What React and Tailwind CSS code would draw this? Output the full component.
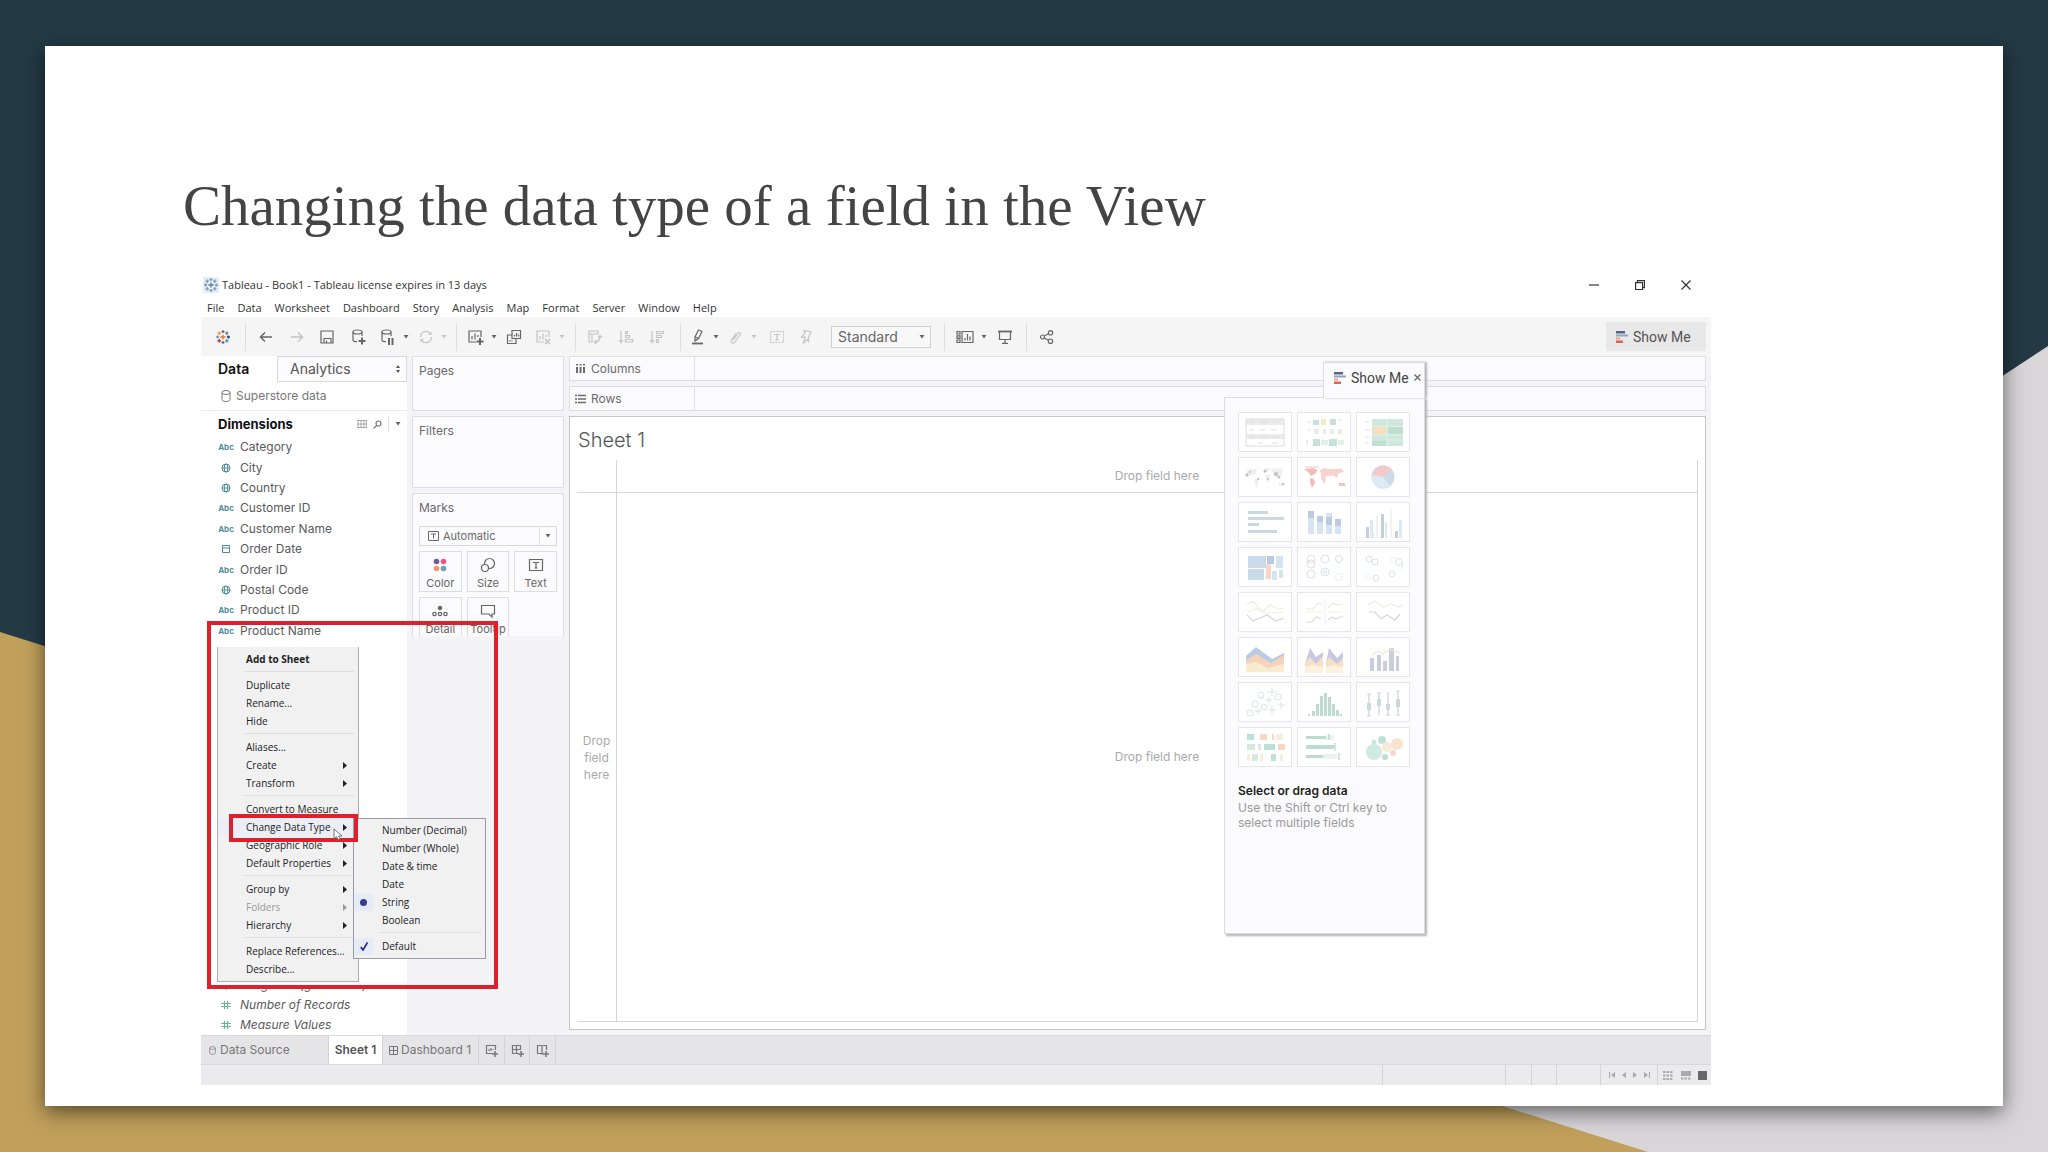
const MENUS = ['File', 'Data', 'Worksheet', 'Dashboard', 'Story', 'Analysis', 'Map', 'Format', 'Server', 'Window', 'Help'];

const FIELDS = [
  { type: 'abc', name: 'Category' },
  { type: 'geo', name: 'City' },
  { type: 'geo', name: 'Country' },
  { type: 'abc', name: 'Customer ID' },
  { type: 'abc', name: 'Customer Name' },
  { type: 'date', name: 'Order Date' },
  { type: 'abc', name: 'Order ID' },
  { type: 'geo', name: 'Postal Code' },
  { type: 'abc', name: 'Product ID' },
  { type: 'abc', name: 'Product Name' },
];

const CONTEXT_ITEMS = [
  { label: 'Add to Sheet', bold: true }, null,
  { label: 'Duplicate' }, { label: 'Rename...' }, { label: 'Hide' }, null,
  { label: 'Aliases...' }, { label: 'Create', sub: true }, { label: 'Transform', sub: true }, null,
  { label: 'Convert to Measure' }, { label: 'Change Data Type', sub: true, active: true },
  { label: 'Geographic Role', sub: true }, { label: 'Default Properties', sub: true }, null,
  { label: 'Group by', sub: true }, { label: 'Folders', sub: true, disabled: true }, { label: 'Hierarchy', sub: true }, null,
  { label: 'Replace References...' }, { label: 'Describe...' },
];

const TYPE_ITEMS = [
  { label: 'Number (Decimal)' }, { label: 'Number (Whole)' }, { label: 'Date & time' }, { label: 'Date' },
  { label: 'String', mark: 'dot' }, { label: 'Boolean' }, null, { label: 'Default', mark: 'check' },
];

const Icon = ({ w = 16, h = 16, className = '', sw = 1.2, children }) => (
  <svg width={w} height={h} viewBox={`0 0 ${w} ${h}`} fill="none" stroke="currentColor" strokeWidth={sw} className={`shrink-0 ${className}`}>
    {children}
  </svg>
);

const Caret = ({ className = 'text-[#666]' }) => (
  <svg width="6" height="4" viewBox="0 0 6 4" className={`shrink-0 ${className}`}><path d="M.5 0h5L3 3.500z" fill="currentColor" /></svg>
);

const plus = (x, y, r, c) => <path key={`${x}-${y}`} d={`M${x - r} ${y}h${2 * r}M${x} ${y - r}v${2 * r}`} stroke={c} />;

const Logo = ({ mono }) => (
  <Icon className={mono ? 'bg-[#e6edf5]' : ''} sw={1.3}>
    {plus(8, 8, 2.6, mono ? '#5b7ea8' : '#e8762c')}
    {plus(8, 2.6, 1.5, mono ? '#7d9cc0' : '#5b6591')}
    {plus(8, 13.4, 1.5, mono ? '#7d9cc0' : '#5b6591')}
    {plus(2.6, 8, 1.5, mono ? '#7d9cc0' : '#7199a6')}
    {plus(13.4, 8, 1.5, mono ? '#7d9cc0' : '#1f457e')}
    {plus(4.2, 4.2, 1.7, mono ? '#7d9cc0' : '#eb912c')}
    {plus(11.8, 4.2, 1.7, mono ? '#7d9cc0' : '#59879b')}
    {plus(4.2, 11.8, 1.7, mono ? '#7d9cc0' : '#c72035')}
    {plus(11.8, 11.8, 1.7, mono ? '#7d9cc0' : '#5b879b')}
  </Icon>
);

const Cyl = ({ w = 10, h = 12, className }) => (
  <svg width={w} height={h} viewBox="0 0 10 12" fill="none" stroke="currentColor" className={`shrink-0 ${className || ''}`}>
    <ellipse cx="5" cy="2.5" rx="4" ry="2" /><path d="M1 2.5v7c0 1.1 1.8 2 4 2s4-.9 4-2v-7" />
  </svg>
);

const ShowMeIcon = () => (
  <svg width="12" height="12" viewBox="0 0 12 12" className="shrink-0">
    <path d="M0 0h9v2.500H0z" fill="#5a628c" /><path d="M0 3.500h12v2H0z" fill="#8fa6c0" />
    <path d="M0 6.500h4v2H0z" fill="#f0a58a" /><path d="M0 9.500h7V12H0z" fill="#e0605c" />
  </svg>
);

/* ---------- toolbar ---------- */
const ICONS = {
  back: <Icon sw={1.5}><path d="M14 8H3M7 3.5 2.5 8 7 12.5" /></Icon>,
  forward: <Icon sw={1.5}><path d="M2 8h11M9 3.5 13.500 8 9 12.500" /></Icon>,
  save: <Icon><path d="M2 2h12v12H2zM5 14V9.500h7V14M7.500 14v-2.500" /></Icon>,
  dbAdd: <Icon w={18} h={18}><path d="M4 4v8c0 1 2 1.700 4 1.700M13 8V4" /><ellipse cx="8.500" cy="4" rx="4.500" ry="2" /><path d="M13 9.500v7M9.500 13h7" strokeWidth="2" /></Icon>,
  dbPause: <Icon w={18} h={18}><path d="M4 4v8c0 1 2 1.700 4 1.700M13 8V4" /><ellipse cx="8.500" cy="4" rx="4.500" ry="2" /><path d="M11 10v7M14.500 10v7" strokeWidth="2" /></Icon>,
  refresh: <Icon><path d="M2.500 8A5.500 5.500 0 0 1 12 4.200M13.500 8A5.500 5.500 0 0 1 4 11.800" /><path d="M13.500 2.500v3.500H10zM2.500 13.500V10H6z" fill="currentColor" stroke="none" /></Icon>,
  sheetAdd: <Icon w={18} h={18}><path d="M10 14H3V3h12v6M6 11.500V8M9 11.500v-6M12 9V7" /><path d="M14 10v7M10.500 13.500h7" strokeWidth="2" /></Icon>,
  duplicate: <Icon><path d="M6 1.500h8.500v8H6zM8.500 7.500V6M10.500 7.500V4M12.500 7.500v-2M6 6H1.500v8.500H10v-5M4 12.500V11M6 12.500v-1" /></Icon>,
  clear: <Icon w={18} h={18}><path d="M10 14H3V3h12v6M6 11.500V8M9 11.500v-6M12 9V7" /><path d="m11 11 5 5m0-5-5 5" strokeWidth="1.500" /></Icon>,
  swap: <Icon><path d="M2 2h9v3H2zM2 5v8h3V5M5 5v8M8 13c4 0 5-2 5-6M11 8.500l2-2 2 2M9.500 11 7.500 13l2 2" /></Icon>,
  asc: <Icon><path d="M3 2v11M1 11l2 2.500L5 11M7.500 2.500h2v2h-2zM7.500 6.500h4v2h-4zM7.500 10.500h7v2.500h-7z" /></Icon>,
  desc: <Icon><path d="M3 2v11M1 11l2 2.500L5 11M7.500 2.500h7v2h-7zM7.500 6.500h5v2h-5zM7.500 10.500h2v3h-2z" /></Icon>,
  highlight: <Icon><path d="M2 14.500h11" strokeWidth="1.800" /><path d="M8.500 1 12 2.500 8.500 9.500 5 12V8zM5.500 8l3 1.500" /></Icon>,
  clip: <Icon><path d="m5 11 5-7c1-1.300 3.200 0 2.300 1.500L7 13c-1.800 2.400-5 .3-3.500-2L8 4.500M6.500 9.500 9 6" /></Icon>,
  label: <Icon><path d="M1.500 2.500h13v11h-13z" strokeDasharray="2 1" /><path d="M5 5.500h6M8 5.500V11M6.500 11h3" /></Icon>,
  pin: <Icon><path d="M6 1.500 7 4 3.500 8.500 7 8l-1.500 6L9 10.500l1.500 2V8.500L13 3z" /></Icon>,
  cards: <Icon w={18}><path d="M1 2.500h3v2.500H1zM1 6.800h3v2.500H1zM1 11h3v2.500H1zM6 2.500h11v11H6zM9 11.500V9M11.500 11.500V5M14 11.500V7.500" /></Icon>,
  present: <Icon><path d="M1 2.500h14" strokeWidth="1.800" /><path d="M2.500 3v7.500h11V3M8 10.500V14M5 14.300h6" /></Icon>,
  share: <Icon><circle cx="3.500" cy="8" r="2" /><circle cx="11.500" cy="3.800" r="2.200" /><circle cx="11.500" cy="12.200" r="2.200" /><path d="m5.300 7 4.200-2.200M5.300 9l4.200 2.200" /></Icon>,
};

// slot widths keep the uneven rhythm of the tool bar
const TOOLS_LEFT = [
  ['logo', 'w-11'], ['|'],
  ['back', 'w-10'], ['forward', 'w-[22px]', '', 'off'], ['save', 'w-[38px]'], ['dbAdd', 'w-6'], ['dbPause', 'w-[46px]', 'caret'], ['refresh', 'w-8 mr-2', 'caret', 'off'], ['|'],
  ['sheetAdd', 'w-12', 'caret'], ['duplicate', 'w-[18px]'], ['clear', 'w-[52px]', 'caret', 'off'], ['|'],
  ['swap', 'w-[38px]', '', 'off'], ['asc', 'w-6', '', 'off'], ['desc', 'w-[38px] mr-1', '', 'off'], ['|'],
  ['highlight', 'w-[46px]', 'caret'], ['clip', 'w-[31px]', 'caret', 'off'], ['label', 'w-[38px]', '', 'off'], ['pin', 'w-5 mr-[15px]', '', 'off'],
];
const TOOLS_RIGHT = [['|'], ['cards', 'w-[52px]', 'caret'], ['present', 'w-4 mr-[13px]'], ['|'], ['share', 'w-10']];

function Tools({ items }) {
  return items.map(([name, width, caret, off], i) => name === '|'
    ? <span key={i} className="w-px h-7 bg-[#dedee0] shrink-0" />
    : (
      <button key={i} aria-label={name} className={`flex items-center justify-center gap-[7px] shrink-0 ${width} ${off ? 'text-[#c4c4c6]' : 'text-[#666]'}`}>
        {name === 'logo' ? <Logo /> : ICONS[name]}
        {caret && <Caret className="text-current" />}
      </button>
    ));
}

function Toolbar() {
  return (
    <div className="flex items-center h-[39px] bg-[#f5f5f6] pr-[5px]">
      <Tools items={TOOLS_LEFT} />
      <div className="relative w-[100px] h-[22px] mr-[13px] shrink-0">
        <select aria-label="Fit" className="appearance-none w-full h-full pl-[6px] border border-[#cfcfd1] bg-[#f8f8f9] text-[14px] leading-[18px] text-[#666]">
          <option>Standard</option>
        </select>
        <span className="absolute right-[6px] top-[9px] pointer-events-none"><Caret /></span>
      </div>
      <Tools items={TOOLS_RIGHT} />
      <button className="ml-auto flex items-center gap-[5px] w-[100px] h-[29px] pl-[10px] bg-[#e8e8e8] font-[Roboto,sans-serif] text-[14px] text-[#555]">
        <ShowMeIcon />Show Me
      </button>
    </div>
  );
}

/* ---------- data pane ---------- */
function FieldIcon({ type }) {
  if (type === 'abc') return <span className="text-[8px] font-bold">Abc</span>;
  if (type === 'geo') return <Icon w={10} h={10} sw={1}><circle cx="5" cy="5" r="4" /><ellipse cx="5" cy="5" rx="1.800" ry="4" /><path d="M1 5h8" /></Icon>;
  if (type === 'date') return <Icon w={10} h={10} sw={1}><path d="M1.500 1.500h7v7h-7zM1.500 4h7" /></Icon>;
  return <Icon w={10} h={10} sw={1.2} className="text-[#6db19c]"><path d="M3.500 1v8M6.500 1v8M0 3.500h10M0 6.500h10" /></Icon>;
}

function Field({ type, name, italic }) {
  return (
    <li className="flex items-center text-[#5a5a5a]">
      <span className="w-[22px] mr-[3px] -ml-1 flex justify-center text-[#4f8c9e]"><FieldIcon type={type} /></span>
      <span className={italic ? 'italic' : ''}>{name}</span>
    </li>
  );
}

function DataPane() {
  return (
    <div className="w-[206px] shrink-0 bg-white flex flex-col">
      <div className="flex h-[26px] text-[14px]">
        <button className="w-[76px] pl-[17px] text-left font-semibold text-[#111]">Data</button>
        <button className="flex-1 flex items-center justify-between pl-3 pr-[5px] border border-[#d9d9db] bg-[#fbfafc] text-[#555]">
          Analytics
          <Icon w={6} h={8}><path d="M3 0l2 3h-4zM3 8l2-3h-4z" fill="currentColor" stroke="none" /></Icon>
        </button>
      </div>
      <div className="flex items-center gap-[5px] h-[29px] pl-5 border-b border-[#ececee] text-[#787878]"><Cyl />Superstore data</div>
      <div className="flex items-center h-[26px] pl-[17px] pr-[6px] text-[#777]">
        <h3 className="text-[13px] font-bold text-[#111] mr-auto">Dimensions</h3>
        <Icon w={10} h={8} className="text-[#999] mr-[6px]"><path d="M1 0v8M4 0v8M7 0v8M9.500 0v8M0 .5h10M0 4h10M0 7.500h10" strokeWidth=".8" /></Icon>
        <Icon w={9} h={9} className="mr-[6px]"><circle cx="5.500" cy="3.500" r="2.500" /><path d="M3.700 5.300.5 8.500" /></Icon>
        <span className="w-px h-4 bg-[#e0e0e2] mr-[6px]" />
        <Caret />
      </div>
      <ul className="grid auto-rows-fr h-[204px] pl-[18px]">
        {FIELDS.map(f => <Field key={f.name} {...f} />)}
      </ul>
      <ul className="mt-auto grid auto-rows-fr h-[60px] pl-[18px]">
        <Field type="geo" name="Longitude (generated)" italic />
        <Field type="num" name="Number of Records" italic />
        <Field type="num" name="Measure Values" italic />
      </ul>
    </div>
  );
}

/* ---------- shelves ---------- */
const MARKS = [
  ['Color', <svg width="16" height="16" viewBox="0 0 16 16"><circle cx="4.500" cy="4.500" r="2.800" fill="#735a93" /><circle cx="11.500" cy="4.500" r="2.800" fill="#e8578a" /><circle cx="4.500" cy="11.500" r="2.800" fill="#f5956b" /><circle cx="11.500" cy="11.500" r="2.800" fill="#6f9fb5" /></svg>],
  ['Size', <Icon><circle cx="9.500" cy="6.500" r="5" /><circle cx="5" cy="11" r="3.500" className="fill-[#fafafb]" /></Icon>],
  ['Text', <Icon><path d="M1.500 2.500h13v11h-13zM5 5.500h6M8 5.500V11M6.500 11h3" /></Icon>],
  ['Detail', <Icon><circle cx="8" cy="5" r="2.200" fill="currentColor" stroke="none" /><circle cx="2.500" cy="11" r="1.700" /><circle cx="8" cy="11" r="1.700" /><circle cx="13.500" cy="11" r="1.700" /></Icon>],
  ['Tooltip', <Icon><path d="M1.500 2.500h13v8.500H12v3l-3-3H1.500z" /></Icon>],
];

function Shelves() {
  const card = 'bg-[#fbfafc] border border-[#dddde0] px-[6px] text-[#6a6a6a]';
  return (
    <div className="w-[152px] shrink-0 ml-[5px] flex flex-col gap-[5px]">
      <div className={`${card} h-[55px] pt-[5px]`}>Pages</div>
      <div className={`${card} h-[72px] pt-[5px]`}>Filters</div>
      <div className={`${card} h-[143px] pt-[5px] border-b-0 overflow-hidden`}>
        Marks
        <button className="mt-[9px] w-full h-5 flex items-center border border-[#d9d9db] text-[11px]">
          <Icon w={11} h={10} className="ml-2 mr-1" sw={1}><path d="M.5.5h10v9H.5zM3 3h5M5.500 3v4.500" /></Icon>
          Automatic
          <span className="ml-auto w-[17px] h-full flex items-center justify-center border-l border-[#e2e2e4]"><Caret /></span>
        </button>
        <div className="mt-[5px] grid grid-cols-3 gap-[5px]">
          {MARKS.map(([label, icon]) => (
            <button key={label} className="h-[41px] pt-[5px] flex flex-col items-center gap-1 border border-[#dddde0] text-[11px] leading-[13px] text-[#666]">
              {icon}{label}
            </button>
          ))}
        </div>
      </div>
    </div>
  );
}

const Shelf = ({ label, children }) => (
  <div className="flex items-center h-[25px] border border-[#dddde0] bg-[#fbfafc] text-[#6a6a6a]">
    <div className="flex items-center gap-[5px] w-[125px] h-full pl-[5px] border-r border-[#dddde0]">{children}{label}</div>
  </div>
);

function SheetView() {
  const drop = 'text-[#a9a9ac]';
  return (
    <div className="flex-1 ml-[5px] mr-[5px] mb-[5px] flex flex-col gap-[5px]">
      <Shelf label="Columns"><Icon w={11} h={10} sw={2}><path d="M2 3v6M5.500 3v6M9 3v6M2 0v1.500M5.500 0v1.500M9 0v1.500" /></Icon></Shelf>
      <Shelf label="Rows"><Icon w={11} h={10} sw={1.500}><path d="M3 1.500h8M3 5h8M3 8.500h8M0 1.500h2M0 5h2M0 8.500h2" /></Icon></Shelf>
      <div className="flex-1 flex flex-col border border-[#c6c6c9] bg-white p-[7px]">
        <h2 className="pl-px pb-1 text-[20px] leading-8 font-light text-[#555]">Sheet 1</h2>
        <div className="flex-1 grid grid-cols-[40px_1fr] grid-rows-[33px_1fr] border-b border-r border-[#d6d6d9] text-center">
          <div className="border-r border-b border-[#d6d6d9]" />
          <div className={`border-b border-[#d6d6d9] flex items-center justify-center ${drop}`}>Drop field here</div>
          <div className={`border-r border-[#d6d6d9] flex items-center justify-center leading-[17px] px-1 ${drop}`}>Drop field here</div>
          <div className={`flex items-center justify-center ${drop}`}>Drop field here</div>
        </div>
      </div>
    </div>
  );
}

/* ---------- show me ---------- */
const bars = (list, fill) => list.map(([x, y, w, h], i) => <rect key={i} x={x} y={y} width={w} height={h} fill={fill} />);
const line = (d, c, w = 1.2) => <path d={d} stroke={c} strokeWidth={w} fill="none" />;

const CHARTS = [
  <g>{bars([[8, 7, 38, 6], [8, 22, 38, 5]], '#e6e4e8')}<path d="M8 7h38v27H8zM11 10h6M22 10h7M34 10h7M11 18h5M22 18h5M33 18h6M11 25h6M22 25h7M34 25h7M20 31h5M34 31h6" stroke="#d2d0d5" fill="none" /></g>,
  <g>{bars([[16, 8, 6, 5], [33, 7, 6, 6], [16, 27, 7, 7], [32, 27, 8, 7]], '#b3d8c8')}{bars([[24, 7, 5, 6]], '#ece9b0')}{bars([[17, 17, 5, 5], [26, 17, 3, 5], [33, 17, 4, 5], [41, 17, 4, 5], [24, 28, 7, 5], [41, 28, 6, 5]], '#d9ece4')}{line('M10 10h4M10 18h4M10 28v5M41 9l3-2', '#d4dad8')}</g>,
  <g>{bars([[16, 7, 31, 27]], '#bfe0d2')}{bars([[17, 15, 14, 7]], '#f5d3a8')}{bars([[31, 15, 16, 7], [16, 27, 14, 7]], '#a9d5c3')}{line('M16 14.500h31M16 23h31M16 28h31M31 7v27', '#d8eee5')}{line('M9 10h4M9 18h5M9 25h4M9 31h4', '#d9d9dd')}</g>,
  <g fill="#d9d3da"><path d="M8 15l3-3 8 0-2 5-5 2zM17 22l4 1-2 8-2-4zM26 12l5-2 1 3-5 3zM27 18l5 0-1 8-3-3zM33 11l12 1-2 7-6 2zM41 26l4 0 0 3-4 0z" opacity=".5" /><g fill="#b3a9b5"><circle cx="9" cy="18" r="1.700" /><circle cx="20" cy="22" r="1.200" /><circle cx="27" cy="14" r="1.500" /><circle cx="38" cy="17" r="2" /><circle cx="41" cy="20" r="1.500" /><circle cx="45" cy="27" r="1.300" /><circle cx="12" cy="15" r="1" /><circle cx="30" cy="22" r="1" /></g></g>,
  <g><path d="M7 12l9-1 5 2-3 4-4 2-3-4zM13 21l4 1 1 4-3 5-2-6z" fill="#eba7a9" /><path d="M23 13l5-2 3 1 14 0 2 3-5 1-2 5-4-3-4 1-3 0-1 8-3-3-1-6z" fill="#f5c3c0" /><path d="M42 26h6v3h-6z" fill="#ecb0b0" />{line('M8 10h14', '#f2bfc0')}</g>,
  <g><circle cx="27" cy="20" r="11.500" fill="#bcd0e4" /><path d="M27 20 36 12.500A11.500 11.500 0 0 0 16 18z" fill="#f0b9b9" /><path d="M27 20 16 18a11.500 11.500 0 0 0 18 11z" fill="#cfe3ef" /></g>,
  <g>{bars([[10, 9, 20, 3], [10, 15, 36, 3], [10, 21, 11, 3], [10, 28, 29, 3]], '#b9cbd7')}</g>,
  <g>{bars([[11, 9, 6, 23], [20, 14, 6, 18], [29, 11, 6, 21], [38, 17, 6, 15]], '#c9dceb')}{bars([[11, 9, 6, 7], [20, 14, 6, 6], [29, 15, 6, 8], [38, 17, 6, 7]], '#a5b9d4')}</g>,
  <g>{bars([[10, 25, 3, 11], [25, 12, 3, 24], [39, 29, 3, 7]], '#b3bdd0')}{bars([[14, 18, 3, 18], [29, 20, 2, 16], [43, 18, 3, 18]], '#cfe3e6')}{line('M21 14v22M35 7v29M18 30v6', '#dde6ea')}</g>,
  <g>{bars([[10, 9, 18, 12], [10, 22, 16, 11]], '#b7d0e2')}{bars([[29, 9, 7, 7], [38, 9, 7, 12], [34, 24, 5, 9], [41, 23, 4, 8]], '#c7dcea')}{bars([[28, 17, 5, 15]], '#f3c9bf')}{bars([[29, 9, 7, 8]], '#a5b9dc')}</g>,
  <g fill="none" stroke="#cfd6da"><circle cx="14" cy="12" r="4" /><circle cx="14" cy="17" r="4" /><circle cx="28" cy="12" r="4" /><circle cx="42" cy="12" r="3.500" /><circle cx="14" cy="27" r="4" /><circle cx="28" cy="25" r="4" stroke="#c3dce8" /><circle cx="28" cy="25" r="1.500" /><circle cx="42" cy="30" r="3.500" strokeOpacity=".5" /></g>,
  <g fill="none" stroke="#cdd8de"><circle cx="13" cy="12" r="3" /><circle cx="19" cy="15" r="3" /><circle cx="43" cy="15" r="3.500" /><path d="M46 15v7" /><circle cx="20" cy="31" r="3" /><circle cx="36" cy="27" r="3" /><circle cx="38" cy="13" r="3" strokeOpacity=".4" /><circle cx="12" cy="30" r="3" strokeOpacity=".4" /></g>,
  <g>{line('M9 12l6-3 9 11 8-7 8 4 6-1', '#e9e6cf')}{line('M10 20l8-3 10 4 18-1', '#f3ead8')}{line('M9 23l6 6 14-6 9 6 8-3', '#c3cfcb')}</g>,
  <g>{line('M9 17l7 0 4-5 5 0M31 16l5-5 4 2 6-1', '#e6e3cb')}{line('M9 20h16M31 20h15', '#f5eada')}{line('M9 30l6 0 4-5 5 2M31 28l4-3 4 2 7-3', '#c7d2cc')}{line('M28 6v28', '#ececec', 1)}</g>,
  <g>{line('M12 13l7-4 8 6 8-3 8 3 3-2', '#ebe8d4')}{line('M13 20l6 0 6 7 6-4 8 5 5-6', '#bfc9cc')}</g>,
  <g><path d="M8 19 18 10l16 12 12-6v18H8z" fill="#a2b9dc" /><path d="M8 23l10-6 15 9 13-8v16H8z" fill="#f3c5a5" /><path d="M8 27l10-2 12 6 16-4v8H8z" fill="#f7e6be" /></g>,
  <g><path d="M8 27l5-16 6 9 7-5v19H8zM29 27l3-16 8 10 6-6v19H29z" fill="#b6b5dc" /><path d="M8 27l5-7 6 7 7-8v14H8zM29 27l3-7 8 7 6-6v12H29z" fill="#f5d7b3" /><path d="M8 30l8-2 10 2v6H8zM29 30l7-2 10 2v6H29z" fill="#faefd4" /></g>,
  <g>{bars([[14, 21, 4, 13], [21, 18, 4, 16], [27, 24, 4, 10], [33, 11, 5, 23], [40, 19, 3, 15]], '#b6bed4')}{line('M16 18l6-4 5 3 7-5 10 4', '#e7e5c8')}</g>,
  <g fill="none" stroke="#d0dcd6"><circle cx="12" cy="31" r="3" /><circle cx="17" cy="22" r="3" /><circle cx="23" cy="13" r="3" /><circle cx="26" cy="25" r="3" /><circle cx="40" cy="15" r="3" /><path d="M17 29h6M20 26v6M28 18h6M31 15v6M30 10h8M34 6v8M31 28h7M34 24v8M40 23h7M43 20v7" /></g>,
  <g>{bars([[11, 32, 2, 2], [15, 29, 3, 5], [19, 22, 3, 12], [23, 14, 3, 20], [27, 11, 3, 23], [31, 15, 3, 19], [35, 22, 3, 12], [39, 28, 3, 6], [43, 32, 2, 2]], '#a7cfc0')}</g>,
  <g>{line('M13 12v22M23 11v22M32 10v23M42 9v24M11 12h4M11 34h4M21 11h4M30 33h4M40 9h4M40 33h4', '#b9c6c9')}{bars([[11, 21, 4, 7], [21, 17, 4, 7], [30, 22, 4, 6], [40, 17, 4, 8]], '#bccdce')}</g>,
  <g>{bars([[9, 7, 7, 6], [26, 17, 11, 6], [33, 27, 5, 7]], '#a9d8ca')}{bars([[22, 7, 7, 6], [34, 7, 2, 6], [40, 17, 7, 6]], '#f5cdb0')}{bars([[9, 17, 8, 6], [20, 17, 3, 6], [14, 27, 6, 7]], '#c9e3d6')}{bars([[38, 7, 7, 6], [9, 27, 3, 7], [22, 27, 3, 7], [42, 27, 3, 7]], '#f1ead0')}</g>,
  <g>{bars([[9, 9, 20, 3], [9, 18, 28, 4], [9, 28, 17, 3]], '#a7cfc0')}{bars([[29, 8, 8, 5], [26, 27, 14, 5]], '#e2efea')}{line('M32 7v6M38 16v8M42 26v7', '#9dc4b6')}</g>,
  <g><circle cx="18" cy="25" r="8" fill="#bfe4d6" /><circle cx="26" cy="13" r="4" fill="#a9d8c8" /><circle cx="18" cy="15" r="2.500" fill="#b9decf" /><circle cx="41" cy="17" r="6" fill="#f6dcc0" /><circle cx="31" cy="20" r="5" fill="#f5e4cf" /><circle cx="37" cy="26" r="3" fill="#efd0b8" /><circle cx="29" cy="30" r="3" fill="#a9cfc2" /></g>,
];

function ShowMePanel() {
  return (
    <div className="absolute top-[6px] right-[286px] w-[201px] text-[#9a9a9c]">
      <div className="relative z-10 ml-auto -mb-px w-[102px] h-9 pb-[6px] pl-[10px] pr-[6px] flex items-center gap-[5px] bg-[#fbfafc] border border-b-0 border-[#dcdce0] shadow-[2px_0_2px_#b5b5b8] font-[Roboto,sans-serif] text-[14px] text-[#444]">
        <ShowMeIcon />
        <span className="whitespace-nowrap">Show Me</span>
        <button aria-label="Close" className="text-[#666]"><Icon w={7} h={7}><path d="M.5.5l6 6M6.500.5l-6 6" /></Icon></button>
      </div>
      <div className="h-[537px] px-[13px] pt-[14px] bg-[#fbfafc] border border-[#dcdce0] shadow-[2px_2px_2px_#b5b5b8]">
        <div className="grid grid-cols-3 gap-[5px] mb-[15px] pr-px">
          {CHARTS.map((chart, i) => (
            <svg key={i} viewBox="0 0 54 40" className="w-full h-10 bg-white outline outline-[#e6e5e9] -outline-offset-1"><g opacity=".75">{chart}</g></svg>
          ))}
        </div>
        <p className="font-semibold text-[#222] leading-[18px]">Select or drag data</p>
        <p className="leading-[15px]">Use the Shift or Ctrl key to select multiple fields</p>
      </div>
    </div>
  );
}

/* ---------- context menu ---------- */
const Arrow = () => <svg width="4" height="7" viewBox="0 0 4 7"><path d="M0 0v7l4-3.500z" fill="currentColor" /></svg>;

function ContextMenu() {
  return (
    <div className="font-['Open_Sans',sans-serif] text-[10px] leading-[18px] font-medium text-[#222]">
      <div className="absolute left-[16px] top-[291px] w-[189px] h-[338px] bg-white" />
      <div role="menu" className="absolute left-[16px] top-[291px] w-[142px] h-[335px] pt-[3px] bg-[#f1f1f2] border border-t-0 border-[#adadb3]">
        {CONTEXT_ITEMS.map((it, i) => it === null
          ? <div key={i} className="h-2 pt-[3px] ml-[26px] mr-1"><div className="h-px bg-[#dedee0]" /></div>
          : (
            <button key={i} role="menuitem" className={`w-full pl-7 pr-[11px] flex items-center justify-between text-left whitespace-nowrap ${it.bold ? 'font-bold' : ''} ${it.disabled ? 'text-[#999]' : ''} ${it.active ? 'bg-[#eceef6]' : ''}`}>
              {it.label}{it.sub && <Arrow />}
            </button>
          ))}
      </div>
      <div role="menu" className="absolute left-[152px] top-[462px] w-[133px] h-[141px] pt-[2px] bg-[#f1f1f2] border border-[#9a9aa8]">
        {TYPE_ITEMS.map((it, i) => it === null
          ? <div key={i} className="h-2 pt-[3px] ml-[26px] mr-1"><div className="h-px bg-[#dedee0]" /></div>
          : (
            <button key={i} role="menuitem" className="w-full flex items-center text-left whitespace-nowrap">
              <span className={`w-[19px] h-[17px] mr-[9px] flex items-center justify-center ${it.mark ? 'bg-[#e6ecf7] text-[#22229a]' : ''}`}>
                {it.mark === 'dot' && <span className="w-[7px] h-[7px] rounded-full bg-[#3c3c8c]" />}
                {it.mark === 'check' && <Icon w={8} h={9} sw={1.600}><path d="M.8 5l2.200 3L7.500.5" /></Icon>}
              </span>
              {it.label}
            </button>
          ))}
      </div>
      {/* callouts */}
      <div className="absolute left-[6px] top-[265px] w-[291px] h-[368px] border-4 border-[#dd202b] pointer-events-none" />
      <div className="absolute left-[28px] top-[458px] w-[129px] h-7 border-4 border-[#dd202b] pointer-events-none" />
      <svg width="10" height="13" viewBox="0 0 10 13" className="absolute left-[132px] top-[472px]"><path d="M1 1v10l2.500-2.500 1.500 3.500 2-1-1.500-3H9z" fill="#fff" stroke="#555" strokeWidth=".8" /></svg>
    </div>
  );
}

function BottomBars() {
  const tab = 'flex items-center h-full border-r border-[#d3d2d5]';
  return (
    <>
      <div className="flex h-[30px] bg-[#e5e4e6] border-y border-[#d9d8db] text-[#777]">
        <button className={`${tab} w-[128px] pl-2 gap-1`}><Cyl w={7} h={9} />Data Source</button>
        <button className={`${tab} w-[54px] justify-center bg-white font-semibold text-[#555]`}>Sheet 1</button>
        <button className={`${tab} w-[96px] pl-[6px] gap-[3px] whitespace-nowrap`}><Icon w={9} h={9} sw={1}><path d="M.5.5h8v8h-8zM4.500.5v8M.5 4.500h8" /></Icon>Dashboard 1</button>
        <button aria-label="New worksheet" className={`${tab} w-[26px] justify-center`}><Icon w={13} h={13} sw={1.2}><path d="M8 9.500H1.500v-8h9V6M4 7V5M6 7V4M8 6V5" /><path d="M10 7v6M7 10h6" strokeWidth="1.500" /></Icon></button>
        <button aria-label="New dashboard" className={`${tab} w-[25px] justify-center`}><Icon w={13} h={13} sw={1.2}><path d="M7 9.500H1.500v-8h8V6M5.500 1.500v8M1.500 5.500h8" /><path d="M10 7v6M7 10h6" strokeWidth="1.500" /></Icon></button>
        <button aria-label="New story" className={`${tab} w-[26px] justify-center`}><Icon w={13} h={13} sw={1.2}><path d="M7 9.500 6 10 5 9.500H1.500v-8H5l1 .5 1-.5h3.500V6M6 2v8" /><path d="M10 7v6M7 10h6" strokeWidth="1.500" /></Icon></button>
      </div>
      <div className="flex justify-end h-5 bg-[#ebeaec] text-[#aaa]">
        <span className="w-[123px] border-l border-[#d3d2d5]" />
        <span className="w-[26px] border-l border-[#d3d2d5]" />
        <span className="w-[25px] border-l border-[#d3d2d5]" />
        <span className="w-[44px] border-l border-[#d3d2d5]" />
        <span className="w-[57px] border-l border-[#d3d2d5] flex items-center justify-around px-1">
          <Icon w={6} h={6}><path d="M.5 0v6" /><path d="M6 0v6L2 3z" fill="currentColor" stroke="none" /></Icon>
          <Icon w={4} h={6}><path d="M4 0v6L0 3z" fill="currentColor" stroke="none" /></Icon>
          <Icon w={4} h={6}><path d="M0 0v6l4-3z" fill="currentColor" stroke="none" /></Icon>
          <Icon w={6} h={6}><path d="M5.500 0v6" /><path d="M0 0v6l4-3z" fill="currentColor" stroke="none" /></Icon>
        </span>
        <span className="w-[54px] border-l border-[#d3d2d5] flex items-center justify-between pl-[5px] pr-1">
          <Icon w={10} h={9} sw={2}><path d="M0 1h10M0 4.500h10M0 8h10" strokeDasharray="2.500 1" /></Icon>
          <Icon w={10} h={9} sw={2}><path d="M0 2.500h10" strokeWidth="5" /><path d="M0 7.500h10" strokeDasharray="2.500 1" /></Icon>
          <span className="w-[9px] h-[9px] bg-[#666]" />
        </span>
      </div>
    </>
  );
}

export default function App() {
  return (
    <div className="relative isolate min-h-screen flex flex-col px-[45px] py-[46px] bg-[#233a44] overflow-hidden">
      <svg className="absolute inset-0 -z-10 w-full h-full" viewBox="0 0 2048 1152" preserveAspectRatio="none">
        <path d="M2048 346 900 1100v52h1148z" fill="#d8d6d8" />
        <path d="M0 632 1648 1152H0z" fill="#c1a05b" />
      </svg>
      <main className="flex-1 flex flex-col bg-white pt-[125px] pb-[21px] pl-[156px] pr-[292px] shadow-[0_6px_20px_rgba(0,0,0,0.55)]">
        <h1 className="-ml-[18px] mb-[31px] font-['Liberation_Serif',serif] text-[57px] leading-[70px] text-[#444] whitespace-nowrap">
          Changing the data type of a field in the View
        </h1>
        <section className="flex-1 flex flex-col font-[Inter,sans-serif] text-[12px] leading-[18px]">
          <header className="font-['Open_Sans',sans-serif] text-[11px] text-[#333]">
            <div className="flex items-center h-[26px] pl-[2px] pr-5">
              <Logo mono />
              <span className="ml-[3px] mr-auto">Tableau - Book1 - Tableau license expires in 13 days</span>
              <div className="flex items-center gap-9">
                <button aria-label="Minimize"><Icon w={10} h={10}><path d="M0 5h10" /></Icon></button>
                <button aria-label="Restore"><Icon w={10} h={10}><path d="M.6 2.600h7v7h-7zM2.500 2.500V.6h7v7H7.600" /></Icon></button>
                <button aria-label="Close"><Icon w={10} h={10}><path d="M.5.5l9 9M9.500.5l-9 9" /></Icon></button>
              </div>
            </div>
            <nav className="flex items-center gap-[13px] h-[19px] pl-[6px]">
              {MENUS.map(m => <button key={m}>{m}</button>)}
            </nav>
          </header>
          <Toolbar />
          <div className="relative flex-1 flex bg-[#f4f3f5]">
            <DataPane />
            <Shelves />
            <SheetView />
            <ShowMePanel />
            <ContextMenu />
          </div>
          <BottomBars />
        </section>
      </main>
    </div>
  );
}
